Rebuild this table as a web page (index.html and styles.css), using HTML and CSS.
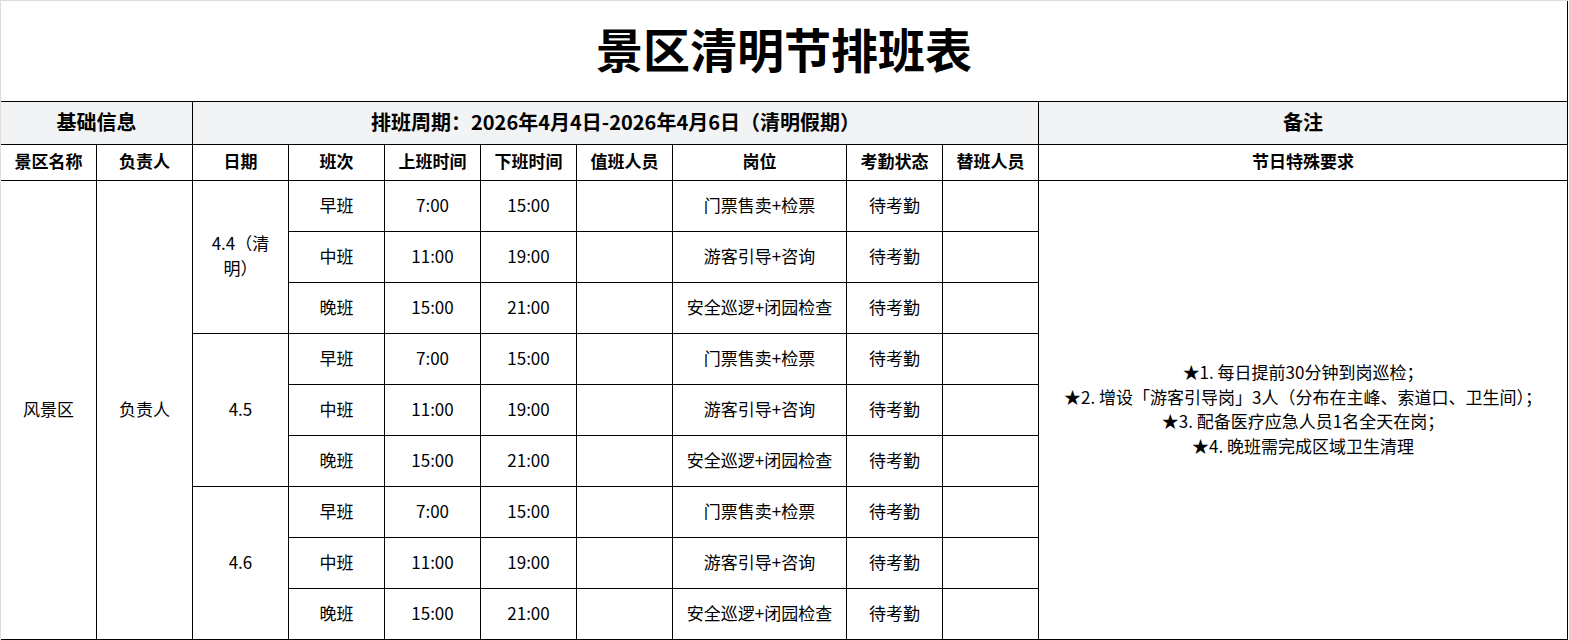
FILE: index.html
```html
<!DOCTYPE html>
<html lang="zh-CN">
<head>
<meta charset="utf-8">
<title>景区清明节排班表</title>
<link rel="stylesheet" href="styles.css">
</head>
<body>
<table class="schedule">
  <colgroup>
    <col class="c-std"><col class="c-std"><col class="c-std"><col class="c-std"><col class="c-std"><col class="c-std"><col class="c-std">
    <col class="c-post">
    <col class="c-std"><col class="c-std">
    <col class="c-note">
  </colgroup>
  <tr class="title-row"><th colspan="11" class="title">景区清明节排班表</th></tr>
  <tr class="group-row">
    <th colspan="2">基础信息</th>
    <th colspan="8">排班周期：2026年4月4日-2026年4月6日（清明假期）</th>
    <th>备注</th>
  </tr>
  <tr class="head-row">
    <th>景区名称</th><th>负责人</th><th>日期</th><th>班次</th><th>上班时间</th><th>下班时间</th><th>值班人员</th><th>岗位</th><th>考勤状态</th><th>替班人员</th><th>节日特殊要求</th>
  </tr>
  <tr class="data-row">
    <td rowspan="9">风景区</td>
    <td rowspan="9">负责人</td>
    <td rowspan="3">4.4（清明）</td>
    <td>早班</td><td>7:00</td><td>15:00</td><td></td><td>门票售卖+检票</td><td>待考勤</td><td></td>
    <td rowspan="9" class="note">★1. 每日提前30分钟到岗巡检；<br>★2. 增设「游客引导岗」3人（分布在主峰、索道口、卫生间）；<br>★3. 配备医疗应急人员1名全天在岗；<br>★4. 晚班需完成区域卫生清理</td>
  </tr>
  <tr class="data-row"><td>中班</td><td>11:00</td><td>19:00</td><td></td><td>游客引导+咨询</td><td>待考勤</td><td></td></tr>
  <tr class="data-row"><td>晚班</td><td>15:00</td><td>21:00</td><td></td><td>安全巡逻+闭园检查</td><td>待考勤</td><td></td></tr>
  <tr class="data-row">
    <td rowspan="3">4.5</td>
    <td>早班</td><td>7:00</td><td>15:00</td><td></td><td>门票售卖+检票</td><td>待考勤</td><td></td>
  </tr>
  <tr class="data-row"><td>中班</td><td>11:00</td><td>19:00</td><td></td><td>游客引导+咨询</td><td>待考勤</td><td></td></tr>
  <tr class="data-row"><td>晚班</td><td>15:00</td><td>21:00</td><td></td><td>安全巡逻+闭园检查</td><td>待考勤</td><td></td></tr>
  <tr class="data-row">
    <td rowspan="3">4.6</td>
    <td>早班</td><td>7:00</td><td>15:00</td><td></td><td>门票售卖+检票</td><td>待考勤</td><td></td>
  </tr>
  <tr class="data-row"><td>中班</td><td>11:00</td><td>19:00</td><td></td><td>游客引导+咨询</td><td>待考勤</td><td></td></tr>
  <tr class="data-row"><td>晚班</td><td>15:00</td><td>21:00</td><td></td><td>安全巡逻+闭园检查</td><td>待考勤</td><td></td></tr>
</table>
</body>
</html>
```

FILE: styles.css
```css
html, body {
  margin: 0;
  padding: 0;
  background: #fff;
}

body {
  font-family: "Noto Sans CJK SC", "Noto Sans", sans-serif;
  color: #000;
}

.schedule {
  width: 1568px;
  table-layout: fixed;
  border-collapse: separate;
  border-spacing: 0;
  border-top: 1px solid #dcdcdc;
  border-left: 1px solid #dcdcdc;
}

.c-std { width: 96px; }
.c-post { width: 174px; }
.c-note { width: 529px; }

.schedule th,
.schedule td {
  box-sizing: border-box;
  padding: 0 8px 4px;
  border-right: 1px solid #000;
  border-bottom: 1px solid #000;
  text-align: center;
  vertical-align: middle;
  font-size: 17px;
  line-height: 25px;
  font-weight: 400;
}

.schedule th {
  font-weight: 700;
}

.title-row { height: 101px; }
.group-row { height: 43px; }
.head-row { height: 36px; }
.data-row { height: 51px; }

.schedule .title {
  font-size: 47px;
  line-height: 60px;
  font-weight: 700;
  padding-bottom: 6px;
}

.group-row th {
  background: #f2f3f5;
  font-size: 20px;
}

.schedule .note {
  line-height: 24.5px;
  padding-bottom: 2px;
}
```
